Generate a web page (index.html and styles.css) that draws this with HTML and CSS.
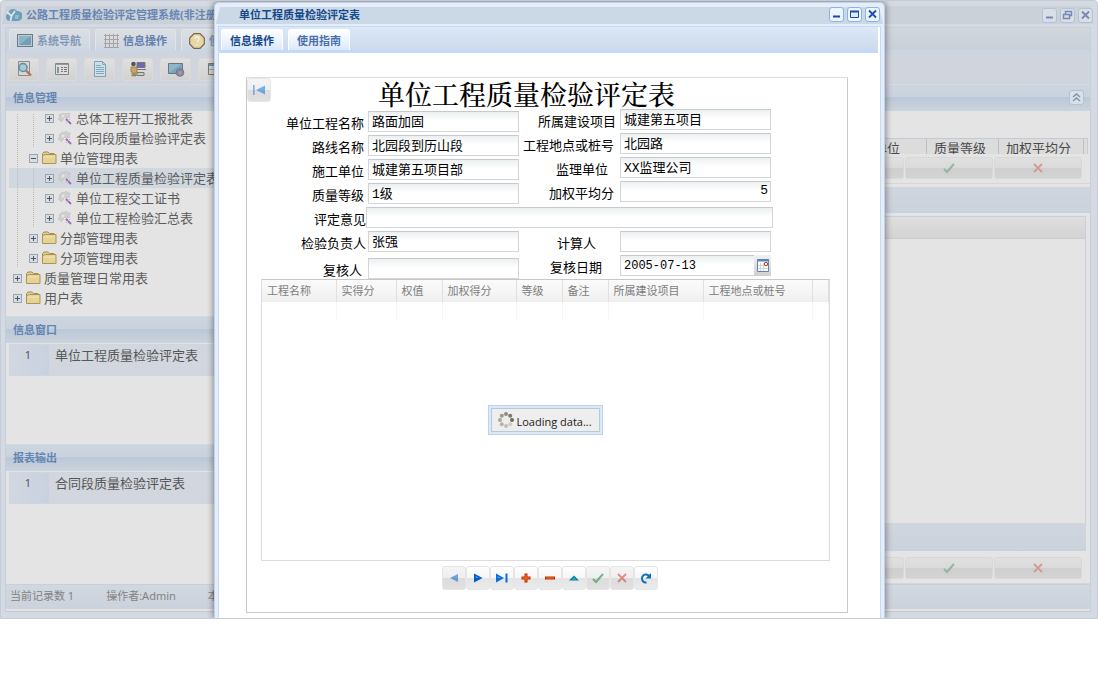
FILE: index.html
```html
<!DOCTYPE html>
<html lang="zh-CN">
<head>
<meta charset="utf-8">
<title>公路工程质量检验评定管理系统</title>
<link rel="stylesheet" href="styles.css">
</head>
<body>
<svg class="defs" aria-hidden="true">
  <symbol id="folder" viewBox="0 0 16 14"><path d="M1.500 12V2.500L3 1h4l1.500 1.500H13V4" fill="#d9cd9c" stroke="#a98f4c"/><path d="M1.500 12.500V4.500l3-1h10.500v9z" fill="#e2d398" stroke="#b2944f"/><path d="M3 6h11" stroke="#efe7bd"/></symbol>
  <symbol id="gearpen" viewBox="0 0 14 14"><path d="M1 4l2-1 1-2 2 1 2-2 2 2 2 0-1 3 1 1-3 1-3-1-1 3-2 2-1-2-2-1 2-2z" fill="#cfcfcf" stroke="#bdbdbd" stroke-width=".6"/><circle cx="5" cy="5" r="1.500" fill="#e4e4e4"/><path d="M8 8l5 5" stroke="#a265bd" stroke-width="1.800"/><path d="M8 12l4-4" stroke="#b9b9b9"/></symbol>
  <symbol id="plus" viewBox="0 0 9 9"><rect x=".5" y=".5" width="8" height="8" fill="#d9dde2" stroke="#98a5b5"/><path d="M2 4.500h5M4.500 2v5" stroke="#4d5663"/></symbol>
  <symbol id="minus" viewBox="0 0 9 9"><rect x=".5" y=".5" width="8" height="8" fill="#d9dde2" stroke="#98a5b5"/><path d="M2 4.500h5" stroke="#4d5663"/></symbol>
  <symbol id="check" viewBox="0 0 12 12"><path d="M1 7l3 3 7-8" fill="none" stroke="currentColor" stroke-width="2"/></symbol>
  <symbol id="cross" viewBox="0 0 12 12"><path d="M2 2l8 8M10 2l-8 8" stroke="currentColor" stroke-width="1.800"/></symbol>
  <symbol id="win-min" viewBox="0 0 15 15"><path d="M4 9.500h7" stroke="currentColor" stroke-width="2"/></symbol>
  <symbol id="win-max" viewBox="0 0 15 15"><path d="M3.500 4.500h8v6h-8z" fill="#dcecff" stroke="currentColor"/><path d="M3 4.500h9" stroke="currentColor" stroke-width="2"/></symbol>
  <symbol id="win-restore" viewBox="0 0 15 15"><path d="M5.500 6V3.500h6v4H10M3.500 6.500h6v4h-6z" fill="none" stroke="currentColor" stroke-width="1.500"/></symbol>
  <symbol id="win-close" viewBox="0 0 15 15"><path d="M4 3.500l7 7M11 3.500l-7 7" stroke="currentColor" stroke-width="1.800"/></symbol>
  <symbol id="monitor" viewBox="0 0 16 14"><rect x=".5" y=".5" width="15" height="12" fill="#bfc9cf" stroke="#6b7a86"/><rect x="2" y="2" width="12" height="9" fill="#6f9fb9"/><path d="M2 11L14 2H2z" fill="#8cb4c8"/></symbol>
</svg>

<div class="app">
  <header class="titlebar">
    <svg class="logo" viewBox="0 0 16 14"><path d="M4 13a4 4 0 0 1-2-7.500A5 5 0 0 1 11 3a5 5 0 0 1 1 10z" fill="#6c9fbb"/><path d="M1 4l4.500 4L9 3M5.500 8l-1 5" fill="none" stroke="#dfe6ea" stroke-width="1.800"/><path d="M9 8h4M9 10h3" stroke="#c5d6df"/></svg>
    <h1 class="title">公路工程质量检验评定管理系统(非注册版)</h1>
    <div class="winbtns">
      <button class="winbtn" aria-label="最小化"><svg><use href="#win-min"/></svg></button>
      <button class="winbtn" aria-label="还原"><svg><use href="#win-restore"/></svg></button>
      <button class="winbtn" aria-label="关闭"><svg><use href="#win-close"/></svg></button>
    </div>
  </header>
  <div class="frame">
    <nav class="tabs">
      <button class="tab"><svg class="tabicon"><use href="#monitor"/></svg>系统导航</button>
      <button class="tab active"><svg class="tabicon" viewBox="0 0 16 16"><path d="M2.500 1v14M6.500 1v14M10.500 1v14M14.500 1v14M1 2.500h15M1 6.500h15M1 10.500h15M1 14.500h15" stroke="#a8a39f"/></svg>信息操作</button>
      <button class="tab"><svg class="tabicon" viewBox="0 0 16 16"><path d="M5 .7h6L15.300 5v6L11 15.300H5L.7 11V5z" fill="#e6d7a4" stroke="#79644a" stroke-width="1.200"/><path d="M6 6q0-2.500 2-2.500T10 6q0 1-2 3M8 11v1.500" fill="none" stroke="#f3efe2" stroke-width="1.500"/></svg>使用指南</button>
    </nav>
    <div class="toolbar">
      <button class="tool" aria-label="查询"><svg viewBox="0 0 18 18"><path d="M3.500 1.500h11v14h-11z" fill="#d7d7d7" stroke="#8b8b8b"/><circle cx="8" cy="7.500" r="4" fill="#a8cad6" stroke="#5f8ea6" stroke-width="1.500"/><path d="M11 10.500l5 5" stroke="#bf6f57" stroke-width="2.400"/></svg></button>
      <button class="tool" aria-label="列表"><svg viewBox="0 0 18 18"><path d="M2.500 3.500h13v11h-13z" fill="#dedede" stroke="#858585"/><path d="M3 4.500h12" stroke="#9a9a9a"/><path d="M4 7h2v6H4z" fill="#7899ab"/><path d="M8 7.500h2M11 7.500h3M8 9.500h2M11 9.500h3M8 11.500h2M11 11.500h3" stroke="#777"/></svg></button>
      <button class="tool" aria-label="文档"><svg viewBox="0 0 18 18"><path d="M3.500 1.500h8l3 3v12h-11z" fill="#cfe0e8" stroke="#7ba2b8"/><path d="M11.500 1.500v3h3M5 5.500h5M5 7.500h8M5 9.500h8M5 11.500h8M5 13.500h8" fill="none" stroke="#7fa9c0"/></svg></button>
      <button class="tool" aria-label="用户"><svg viewBox="0 0 18 18"><path d="M8 2.500h8v5H8z" fill="#6d68b8" stroke="#777"/><path d="M7 9.500h10M8 12.500h7v3H8z" fill="#ccc" stroke="#777"/><circle cx="4.500" cy="4" r="2.300" fill="#555"/><path d="M2 7h6v5H7v4H5.500v-3h-1v3H3v-4H2z" fill="#c9a668" stroke="#87704a" stroke-width=".7"/></svg></button>
      <button class="tool" aria-label="网络"><svg viewBox="0 0 18 18"><path d="M1.500 3.500h14v10h-14z" fill="#78a5bd" stroke="#67757f"/><path d="M2 13L14 4H2z" fill="#90b6c9"/><circle cx="13" cy="12.500" r="3.800" fill="#6d8fb3" stroke="#8d6a94"/><path d="M11 12l3-1 1 3-2 1z" fill="#b0a565"/></svg></button>
      <button class="tool" aria-label="表格"><svg viewBox="0 0 18 18"><path d="M3.500 3.500h12v11h-12z" fill="#d6d9d9" stroke="#777"/><path d="M4 5h11" stroke="#6e9db5" stroke-width="2"/><path d="M4 9.500h11M9.500 6v8" stroke="#a0aaa4"/></svg></button>
    </div>
    <div class="main">
      <aside class="side">
        <h2 class="head">信息管理</h2>
        <div class="treebox">
          <ul class="tree">
            <li><i></i><i></i><svg class="tog"><use href="#plus"/></svg><svg class="ico"><use href="#gearpen"/></svg>总体工程开工报批表</li>
            <li><i></i><i></i><svg class="tog"><use href="#plus"/></svg><svg class="ico"><use href="#gearpen"/></svg>合同段质量检验评定表</li>
            <li><i></i><svg class="tog"><use href="#minus"/></svg><svg class="ico"><use href="#folder"/></svg>单位管理用表</li>
            <li class="selected"><i></i><i></i><svg class="tog"><use href="#plus"/></svg><svg class="ico"><use href="#gearpen"/></svg>单位工程质量检验评定表</li>
            <li><i></i><i></i><svg class="tog"><use href="#plus"/></svg><svg class="ico"><use href="#gearpen"/></svg>单位工程交工证书</li>
            <li><i></i><i></i><svg class="tog"><use href="#plus"/></svg><svg class="ico"><use href="#gearpen"/></svg>单位工程检验汇总表</li>
            <li><i></i><svg class="tog"><use href="#plus"/></svg><svg class="ico"><use href="#folder"/></svg>分部管理用表</li>
            <li><i></i><svg class="tog"><use href="#plus"/></svg><svg class="ico"><use href="#folder"/></svg>分项管理用表</li>
            <li><svg class="tog"><use href="#plus"/></svg><svg class="ico"><use href="#folder"/></svg>质量管理日常用表</li>
            <li><svg class="tog"><use href="#plus"/></svg><svg class="ico"><use href="#folder"/></svg>用户表</li>
          </ul>
        </div>
        <h2 class="head">信息窗口</h2>
        <div class="listbox"><div class="listrow"><span class="num">1</span><span class="name">单位工程质量检验评定表</span></div></div>
        <h2 class="head">报表输出</h2>
        <div class="listbox last"><div class="listrow"><span class="num">1</span><span class="name">合同段质量检验评定表</span></div></div>
      </aside>
      <section class="content">
        <div class="head right"><button class="collapse" aria-label="折叠"><svg viewBox="0 0 15 15"><path d="M4 7l3.500-3L11 7M4 11l3.500-3 3.500 3" fill="none" stroke="currentColor" stroke-width="1.500"/></svg></button></div>
        <div class="gridhead"><span class="c1">监理单位</span><span class="c2">质量等级</span><span class="c3">加权平均分</span></div>
        <div class="wide-btns"><button aria-label="上移"></button><button class="ok" aria-label="确认"><svg><use href="#check"/></svg></button><button class="no" aria-label="取消"><svg><use href="#cross"/></svg></button></div>
        <div class="band first"></div>
        <div class="subgrid"><div class="subhead"></div></div>
        <div class="band second"></div>
        <div class="wide-btns low"><button aria-label="上移"></button><button class="ok" aria-label="确认"><svg><use href="#check"/></svg></button><button class="no" aria-label="取消"><svg><use href="#cross"/></svg></button></div>
      </section>
    </div>
    <footer class="status"><span>当前记录数 1</span><span>操作者:Admin</span><span>本</span></footer>
  </div>

  <section class="dialog" role="dialog" aria-labelledby="dlg-title">
    <header class="titlebar">
      <h2 class="title" id="dlg-title">单位工程质量检验评定表</h2>
      <div class="winbtns">
        <button class="winbtn" aria-label="最小化"><svg><use href="#win-min"/></svg></button>
        <button class="winbtn" aria-label="最大化"><svg><use href="#win-max"/></svg></button>
        <button class="winbtn" aria-label="关闭"><svg><use href="#win-close"/></svg></button>
      </div>
    </header>
    <div class="dlg-frame">
      <nav class="tabs">
        <button class="tab active">信息操作</button>
        <button class="tab">使用指南</button>
      </nav>
      <form class="sheet">
        <div class="sheet-top">
          <button type="button" class="nav dim" aria-label="首条"><svg viewBox="0 0 12 12"><path d="M0 1h1.600v10H0zM12 1.500v9L3 6z" fill="#2b84dc"/></svg></button>
          <h3 class="sheet-title">单位工程质量检验评定表</h3>
        </div>
        <div class="pair">
          <div class="fields left">
            <div class="field"><label class="p4" for="f1">单位工程名称</label><input id="f1" value="路面加固"></div>
            <div class="field"><label class="p4" for="f2">路线名称</label><input id="f2" value="北园段到历山段"></div>
            <div class="field"><label class="p4" for="f3">施工单位</label><input id="f3" value="城建第五项目部"></div>
            <div class="field"><label class="p4" for="f4">质量等级</label><input id="f4" value="1级"></div>
          </div>
          <div class="fields">
            <div class="field"><label class="p4" for="g1">所属建设项目</label><input id="g1" value="城建第五项目"></div>
            <div class="field"><label class="p6" for="g2">工程地点或桩号</label><input id="g2" value="北园路"></div>
            <div class="field"><label class="p12" for="g3">监理单位</label><input id="g3" value="XX监理公司"></div>
            <div class="field"><label class="p6" for="g4">加权平均分</label><input id="g4" class="number" value="5"></div>
          </div>
        </div>
        <div class="field full"><label for="f5">评定意见</label><input id="f5"></div>
        <div class="pair bottom">
          <div class="fields left">
            <div class="field"><label class="p2" for="f6">检验负责人</label><input id="f6" value="张强"></div>
            <div class="field"><label class="p6" for="f7">复核人</label><input id="f7"></div>
          </div>
          <div class="fields">
            <div class="field"><label class="p24" for="g6">计算人</label><input id="g6"></div>
            <div class="field"><label class="p18" for="g7">复核日期</label><span class="datebox"><input id="g7" class="date" value="2005-07-13"><button type="button" class="cal" aria-label="选择日期"><svg viewBox="0 0 12 13"><path d="M.5.5h11v12H.5z" fill="#fff" stroke="#5e86b5"/><path d="M0 1.500h12" stroke="#5e86b5" stroke-width="2"/><path d="M3.500 4v8M6.500 4v8M1 6.500h10M1 9.500h10" stroke="#d5d5d5"/><circle cx="9" cy="5" r="1.700" fill="#fff" stroke="#c0392b"/></svg></button></span></div>
          </div>
        </div>
        <div class="gridbox">
          <table class="grid">
            <colgroup><col class="w74"><col class="w60"><col class="w46"><col class="w74"><col class="w46"><col class="w46"><col class="w95"><col class="w109"><col></colgroup>
            <thead><tr><th>工程名称</th><th>实得分</th><th>权值</th><th>加权得分</th><th>等级</th><th>备注</th><th>所属建设项目</th><th>工程地点或桩号</th><th></th></tr></thead>
            <tbody><tr><td></td><td></td><td></td><td></td><td></td><td></td><td></td><td></td><td></td></tr></tbody>
          </table>
          <div class="loading" role="status"><div class="loading-in"><svg viewBox="0 0 16 16"><g><circle cx="8" cy="2" r="2" fill="#8f8b84"/><circle cx="12.200" cy="3.800" r="2" fill="#7e7971"/><circle cx="14" cy="8" r="2" fill="#6d675e"/><circle cx="12.200" cy="12.200" r="2" fill="#cfccc0"/><circle cx="8" cy="14" r="2" fill="#c2bfb6"/><circle cx="3.800" cy="12.200" r="2" fill="#b7b4ab"/><circle cx="2" cy="8" r="2" fill="#aaa69e"/><circle cx="3.800" cy="3.800" r="2" fill="#9c9890"/></g></svg>Loading data...</div></div>
        </div>
        <div class="navbar">
          <button type="button" class="nav dim" aria-label="上一条"><svg viewBox="0 0 12 12"><path d="M10 2v8L2 6z" fill="#1a6fd0"/></svg></button>
          <button type="button" class="nav" aria-label="下一条"><svg viewBox="0 0 12 12"><path d="M2 1.500v9L10.500 6z" fill="#0758c5"/><path d="M3.500 4l4 2H3.500z" fill="#3fa0f5"/></svg></button>
          <button type="button" class="nav" aria-label="末条"><svg viewBox="0 0 12 12"><path d="M0 1.500v9L8 6zM9.500 1.500h2v9h-2z" fill="#0d6bd8"/><path d="M1.500 4l4 2h-4z" fill="#3fa0f5"/></svg></button>
          <button type="button" class="nav" aria-label="添加"><svg viewBox="0 0 12 12"><path d="M6 1.500v9M1.500 6h9" stroke="#bd2a00" stroke-width="3"/><path d="M6 2.500v7M2.500 6h7" stroke="#ff7a1a"/></svg></button>
          <button type="button" class="nav" aria-label="删除"><svg viewBox="0 0 12 12"><path d="M1 6h10" stroke="#bd2a00" stroke-width="3"/><path d="M2 6h8" stroke="#ff7a1a"/></svg></button>
          <button type="button" class="nav" aria-label="编辑"><svg viewBox="0 0 12 12"><path d="M1 8.500L6 3.500l5 5z" fill="#05859a"/><path d="M4 7.500l2-2 2 2z" fill="#2fc0cc"/></svg></button>
          <button type="button" class="nav dim ok" aria-label="确认"><svg><use href="#check"/></svg></button>
          <button type="button" class="nav dim no" aria-label="取消"><svg><use href="#cross"/></svg></button>
          <button type="button" class="nav" aria-label="刷新"><svg viewBox="0 0 12 12"><path d="M6.500 10.500A4 4 0 1 1 9 4" fill="none" stroke="#0b6fc0" stroke-width="2"/><path d="M11 1v5.500H5.500z" fill="#0b6fc0"/></svg></button>
        </div>
      </form>
    </div>
  </section>
</div>
</body>
</html>
```
FILE: styles.css
```css
* { box-sizing: border-box; }
body {
  margin: 0;
  background: #fff;
  font: 11px/16px "Noto Sans", "Noto Sans CJK SC", sans-serif;
}
.defs { position: absolute; width: 0; height: 0; }
button {
  border: 0;
  padding: 0;
  margin: 0;
  background: none;
  font: inherit;
  color: inherit;
  display: inline-flex;
  align-items: center;
  justify-content: center;
}
h1, h2, h3, ul { margin: 0; padding: 0; }
svg { display: block; flex: none; }

/* application window */
.app {
  position: relative;
  overflow: hidden;
  background: #d5d9e1;
  border: 1px solid #c3ccd8;
  border-radius: 4px 4px 0 0;
  padding: 0 6px 6px 4px;
}
.titlebar {
  position: relative;
  display: flex;
  align-items: center;
  height: 26px;
  padding: 2px 0 0 1px;
  z-index: 0;
}
.titlebar::before {
  content: "";
  position: absolute;
  z-index: -1;
  inset: 5px -3px 3px -3px;
  background: #cad1d9;
  clip-path: polygon(4px 0, calc(100% - 4px) 0, 100% 100%, 0 100%);
}
.logo { width: 16px; height: 14px; }
.title {
  flex: 1;
  min-width: 0;
  white-space: nowrap;
  font-size: 11px;
  font-weight: 700;
  line-height: 16px;
  color: #6686b2;
}
.app > .titlebar .title { padding-left: 4px; }
.app > .titlebar .winbtns { margin-right: -2px; }
.winbtns { display: flex; gap: 3px; }
.winbtn, .collapse {
  width: 15px;
  height: 15px;
  border: 1px solid #b3c2d8;
  border-radius: 3px;
  background: #dadfe5;
  color: #7888b6;
}
.winbtn svg, .collapse svg { width: 15px; height: 15px; }
.frame { border: 1px solid #c5cfde; border-bottom-color: #c0cbd9; background: #e4e4e4; padding-bottom: 2px; }
.tabs {
  display: flex;
  align-items: flex-end;
  gap: 5px;
  height: 25px;
  padding-left: 3px;
  background: linear-gradient(#d1d6dd, #c9d0d9);
  border-bottom: 3px solid #cbd5e3;
}
.tab {
  height: 21px;
  padding: 2px 8px 0;
  gap: 4px;
  border-radius: 3px 3px 0 0;
  border: 1px solid #dfe4ec;
  border-bottom: 0;
  background: linear-gradient(#dcdfe3, #cdd6e2);
  color: #8298b8;
  font-weight: 700;
}
.tab.active { color: #6382ae; }
.tabicon { width: 16px; height: 16px; }
.frame .tab { padding: 1px 8px 0 7px; }
.toolbar {
  display: flex;
  align-items: center;
  gap: 7px;
  height: 31px;
  padding: 1px 2px 0;
  background: #d0d5dd;
}
.tool {
  width: 31px;
  height: 23px;
  border-radius: 3px;
  border: 1px solid #dadada;
  background: linear-gradient(#e0e0e0, #d2d2d2);
}
.tool svg { width: 18px; height: 18px; }
.main { display: flex; }
.side { width: 224px; flex: none; }
.content { flex: 1; min-width: 0; display: flex; flex-direction: column; }
.head {
  height: 27px;
  padding: 5px 7px 0;
  border-top: 1px solid #d2dae4;
  border-bottom: 1px solid #c9d4e0;
  background: linear-gradient(#cdd5df 0, #c9d2de 12px, #bac8d9 12px, #cbd3dc 25px);
  font-size: 11px;
  font-weight: 700;
  line-height: 16px;
  color: #6385b2;
}
.treebox { height: 205px; padding: 2px 0 0 3px; }
.tree { list-style: none; overflow: hidden; display: flex; flex-direction: column; height: 195px; justify-content: flex-end; }
.tree li {
  flex: none;
  display: flex;
  align-items: center;
  height: 20px;
  padding-left: 4px;
  font-size: 13px;
  color: #5c5c5c;
  white-space: nowrap;
}
.tree li.selected { background: #d1d7df; }
.tree i { width: 16px; height: 20px; flex: none; background: linear-gradient(#bbb 50%, transparent 50%) 4px 0 / 1px 2px repeat-y; }
.tog { width: 9px; height: 9px; margin-right: 3px; }
.ico { width: 16px; height: 14px; margin-right: 3px; }
.listbox { height: 101px; padding: 1px 0 0 3px; }
.listbox.last { height: 113px; }
.listrow {
  display: flex;
  height: 32px;
  border: 1px solid #cdd5e0;
  background: #d2d7df;
  color: #565656;
  line-height: 20px;
}
.num { width: 39px; padding-right: 3px; text-align: center; background: linear-gradient(90deg, #d2d8e1, #c9d1e0); }
.name { padding-left: 6px; font-size: 13px; white-space: nowrap; }
.right { display: flex; justify-content: flex-end; padding-right: 6px; }
.collapse { color: #7894b4; }
.gridhead {
  display: flex;
  justify-content: flex-end;
  height: 16px;
  margin: 27px 2px 3px 0;
  border-top: 1px solid #c0cad9;
  border-right: 1px solid #ccc;
  background: #dcdcdc;
  overflow: hidden;
  font-size: 13px;
  line-height: 18px;
  color: #4a4a4a;
  padding-right: 3px;
}
.gridhead span { border-right: 1px solid #bfbfbf; padding-left: 7px; white-space: nowrap; }
.c1 { width: 86px; }
.c2 { width: 72px; }
.c3 { width: 85px; }
.wide-btns { display: flex; justify-content: flex-end; gap: 1px; padding-right: 8px; height: 27px; border-bottom: 1px solid #d6d6d6; }
.wide-btns button {
  width: 88px;
  height: 22px;
  border: 1px solid #d8d8d8;
  border-radius: 3px;
  background: linear-gradient(#e0e0e0 0, #dadada 50%, #cfcfcf 50%, #d3d3d3);
}
.wide-btns svg, .nav svg { width: 12px; height: 12px; }
.wide-btns .ok { color: #92b5a0; }
.wide-btns .no { color: #d69a95; }
.wide-btns.low { padding-top: 6px; height: 33px; }
.band { background: linear-gradient(#d0d6de, #cad2dc); border-bottom: 2px solid #c7d2e1; }
.band.first { margin: 3px 0; height: 26px; }
.band.second { height: 28px; margin-right: 4px; border-bottom-width: 1px; }
.subgrid { flex: 1; min-height: 302px; margin-right: 4px; border: 1px solid #c6d0de; border-bottom: 0; }
.subhead { height: 22px; background: linear-gradient(#dedede, #d4d4d4); border-bottom: 1px solid #cecece; }
.status {
  display: flex;
  gap: 32px;
  height: 25px;
  padding: 3px 4px;
  border-top: 1px solid #c5cfdd;
  background: linear-gradient(#d2d8e0, #cbd2db);
  color: #838383;
}

/* dialog window laid over the application */
.dialog {
  position: absolute;
  inset: 1px 212px 0 213px;
  padding: 0 3px;
  background: #e4edf9;
  border: 1px solid #c1d2e8;
  border-bottom: 0;
  border-radius: 5px 5px 0 0;
  box-shadow: 0 0 6px 1px rgba(0, 0, 0, .4);
  display: flex;
  flex-direction: column;
}
.dialog .titlebar { height: 24px; padding: 0 1px 0 21px; }
.dialog .titlebar::before { inset: 4px -2px 2px -2px; background: #cbd8e6; }
.dialog .title { color: #15498b; }
.dialog .winbtn { border-color: #8db2e3; background: #edf6ff; color: #1f48ac; }
.dlg-frame { flex: 1; background: #fff; border: 1px solid #c4d9f3; border-bottom: 0; padding-right: 2px; }
.dialog .tabs { height: 26px; background: linear-gradient(#dce8f6, #ccdaec); border-bottom-color: #c3daf8; padding-left: 2px; }
.dialog .tab { border-color: #fff; background: linear-gradient(#fff, #dbe9fb); color: #4a70a8; }
.dialog .tab.active { color: #15498b; }

/* entry sheet */
.sheet {
  margin: 24px 30px 5px 27px;
  padding-bottom: 22px;
  border: 1px solid #c9c9c9;
  border-top-color: #dedede;
}
.sheet-top { display: flex; height: 31px; }
.sheet-title {
  flex: 1;
  padding-left: 107px;
  font: 500 27px/36px "Liberation Serif", "Noto Serif CJK SC", "Noto Sans CJK SC", serif;
  color: #000;
  white-space: nowrap;
}
.pair { display: flex; }
.fields { display: flex; flex-direction: column; gap: 3px; }
.fields.left { padding-top: 2px; }
.field { display: flex; }
.field label {
  width: 101px;
  padding-top: 4px;
  text-align: right;
  white-space: nowrap;
  font: 13px/20px "Liberation Mono", "Noto Sans CJK SC", monospace;
  color: #000;
  height: 21px;
}
.left label { width: 121px; }
.field .p2 { padding-right: 2px; }
.field .p4 { padding-right: 4px; }
.field .p6 { padding-right: 6px; }
.field .p12 { padding-right: 12px; }
.field .p18 { padding-right: 18px; }
.field .p24 { padding-right: 24px; }
.field input {
  width: 151px;
  height: 21px;
  margin: 0;
  padding: 0 3px 2px;
  border: 1px solid #d3d6d8;
  border-top-color: #c5cacc;
  border-radius: 0;
  background: linear-gradient(#eceff0, #fff 9px);
  font: 13px/17px "Liberation Mono", "Noto Sans CJK SC", monospace;
  color: #000;
}
.field .number { text-align: right; padding-right: 2px; }
.full { padding: 3px 0; }
.field.full label { width: 119px; }
.field.full input { width: 407px; }
.bottom .left { padding-top: 0; gap: 6px; }
.datebox { display: flex; width: 151px; }
.field .date { flex: 1; min-width: 0; padding-bottom: 0; font-size: 12px; border-right: 0; }
.cal { width: 17px; height: 21px; background: linear-gradient(#f2f2f2, #cfcfcf); }
.cal svg { width: 12px; height: 13px; }
.gridbox {
  position: relative;
  height: 282px;
  margin: 0 17px 0 14px;
  border: 1px solid #dcdcdc;
  border-top-color: #c8c8c8;
}
.grid { width: 100%; border-collapse: collapse; table-layout: fixed; }
.w46 { width: 46px; }
.w60 { width: 60px; }
.w74 { width: 74px; }
.w95 { width: 95px; }
.w109 { width: 109px; }
.grid th {
  height: 22px;
  padding: 0 0 0 5px;
  text-align: left;
  font-weight: 400;
  white-space: nowrap;
  color: #7d7d7d;
  background: linear-gradient(#fbfbfb, #efefef);
  border-right: 1px solid #e0e0e0;
}
.grid td { height: 18px; padding: 0; border-right: 1px solid #f5f5f5; }
.loading {
  position: absolute;
  left: 50%;
  top: 125px;
  margin-left: -58px;
  width: 115px;
  padding: 2px;
  border: 1px solid #bfd3ee;
  background: #dce8f6;
}
.loading-in {
  display: flex;
  gap: 3px;
  height: 24px;
  padding: 3px 0 0 6px;
  border: 1px solid #b7c9dd;
  background: #eee;
  font: 11px/20px "Open Sans", "Noto Sans", sans-serif;
  color: #222;
  white-space: nowrap;
}
.loading svg { width: 16px; height: 16px; }
.navbar { display: flex; justify-content: center; padding: 5px 0 0 6px; }
.nav {
  width: 24px;
  height: 24px;
  border: 1px solid #e6e6e6;
  border-radius: 3px;
  background: linear-gradient(#fff 0, #f6f6f6 50%, #e4e4e4 50%, #ebebeb);
}
.nav.dim { background: linear-gradient(#f5f5f5 0, #eee 50%, #dcdcdc 50%, #e0e0e0); }
.nav.dim svg { opacity: .6; }
.nav.ok { color: #2c8a4c; }
.nav.no { color: #d8483c; }
```
